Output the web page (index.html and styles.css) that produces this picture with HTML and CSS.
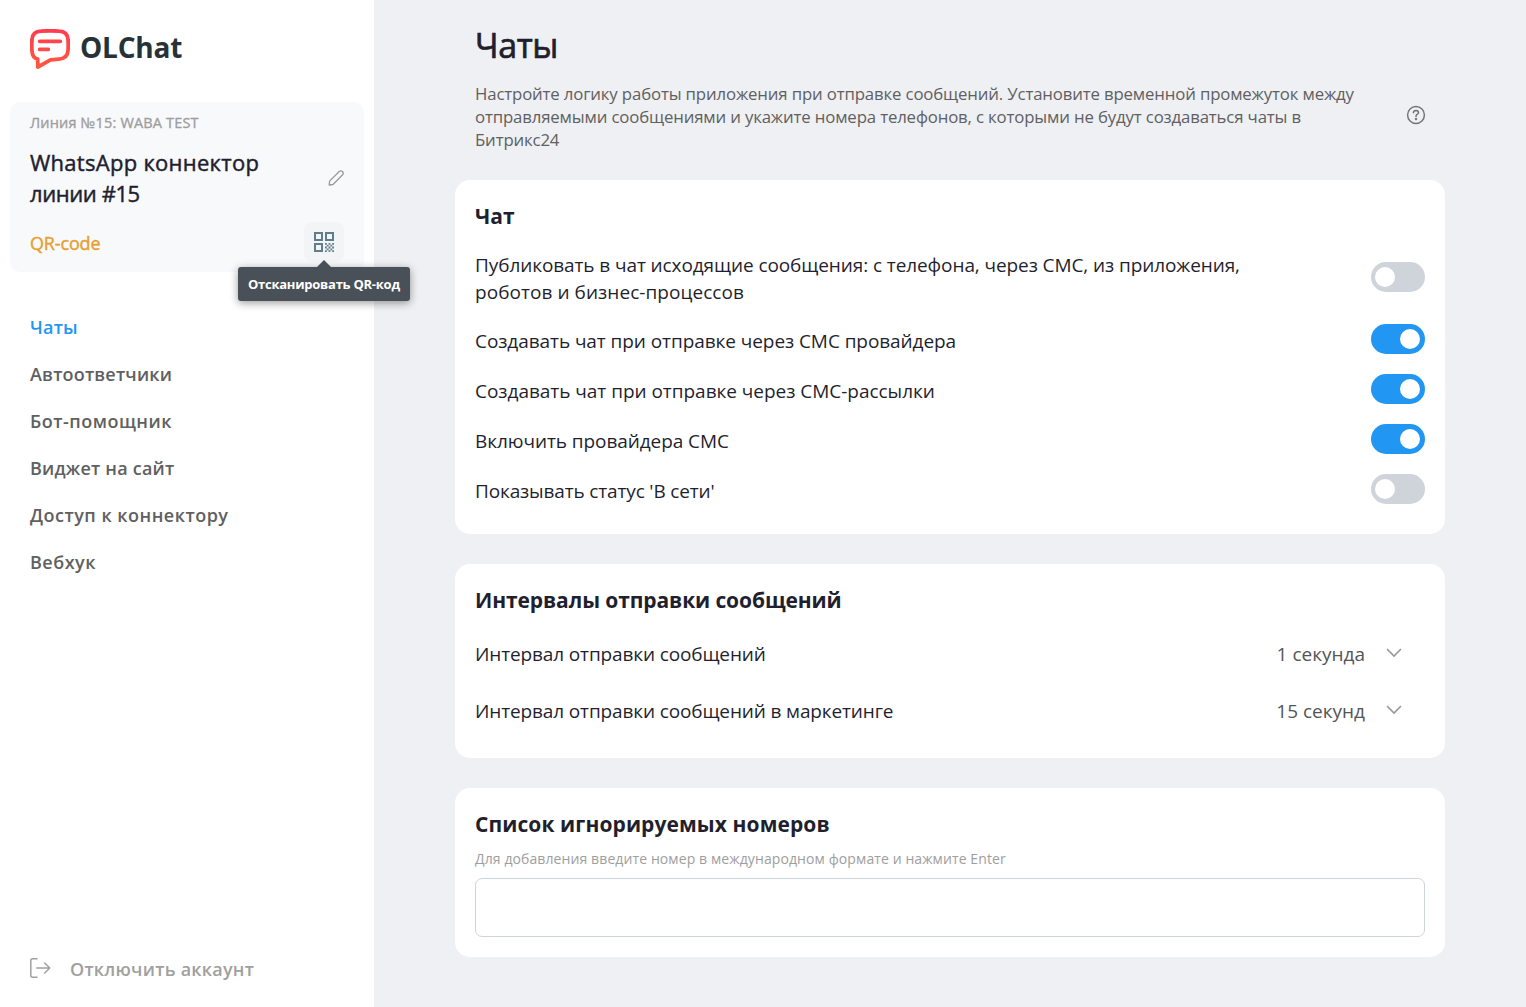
FILE: index.html
```html
<!DOCTYPE html>
<html lang="ru">
<head>
<meta charset="utf-8">
<title>OLChat</title>
<link rel="stylesheet" href="styles.css">
</head>
<body>
<div class="app">
  <aside class="sidebar">
    <a class="brand">
      <svg class="brand-icon" width="40" height="40" viewBox="0 0 40 40" fill="none">
        <defs><linearGradient id="coral" x1="0" y1="0" x2="0" y2="40" gradientUnits="userSpaceOnUse"><stop stop-color="#ff3c50"/><stop offset="1" stop-color="#ff5a3f"/></linearGradient></defs>
        <g stroke="url(#coral)" stroke-width="3.8" stroke-linecap="round" stroke-linejoin="round">
          <path d="M11 2.1Q20 1.6 29 2.1Q37.5 2.3 38 10.5Q38.5 16 38 21.5Q37.5 29.5 29 30.2L20.5 30.8L7.8 38L7.7 30Q2.3 29 2 22Q1.5 16 2 10.5Q2.5 2.3 11 2.1Z"/>
          <path d="M9.7 12.3H30.3V12.35H9.7M9.7 20.4H18.3"/>
        </g>
      </svg>
      <span class="brand-name">OLChat</span>
    </a>
    <section class="line-card">
      <div class="line-label"><span>Линия №15: WABA TEST</span></div>
      <div class="line-head">
        <div class="line-name"><span class="n1">WhatsApp коннектор</span><br><span class="n2">линии #15</span></div>
        <svg class="edit" width="16" height="16" viewBox="0 0 16 16" fill="none" stroke="#999" stroke-width="1.3" stroke-linejoin="round"><path d="M1.2 15L1.6 11.1L11.2 1.5Q12.9 .2 14.5 1.5Q15.9 3.1 14.6 4.8L5 14.5Z"/></svg>
      </div>
      <div class="line-foot">
        <span class="status">QR-code</span>
        <button class="qr" aria-label="Отсканировать QR-код">
          <svg width="20" height="20" viewBox="0 0 20 20" fill="#607d8b"><path fill-rule="evenodd" d="M0 0H9V9H0ZM2 2V7H7V2ZM11 0H20V9H11ZM13 2V7H18V2ZM0 11H9V20H0ZM2 13V18H7V13Z"/><path d="M11 11h1.8v1.8h-1.8zM14.6 11h1.8v1.8h-1.8zM12.8 12.8h1.8v1.8h-1.8zM16.4 12.8h1.8v1.8h-1.8zM18.2 11h1.8v1.8h-1.8zM11 14.6h1.8v1.8h-1.8zM14.6 14.6h1.8v1.8h-1.8zM18.2 14.6h1.8v1.8h-1.8zM12.8 16.4h1.8v1.8h-1.8zM16.4 16.4h1.8v1.8h-1.8zM11 18.2h1.8v1.8h-1.8zM14.6 18.2h1.8v1.8h-1.8zM18.2 18.2h1.8v1.8h-1.8z"/></svg>
          <span class="tooltip"><span>Отсканировать QR-код</span></span>
        </button>
      </div>
    </section>
    <nav class="menu">
      <a class="active"><span class="m1">Чаты</span></a>
      <a><span class="m2">Автоответчики</span></a>
      <a><span class="m3">Бот-помощник</span></a>
      <a><span class="m4">Виджет на сайт</span></a>
      <a><span class="m5">Доступ к коннектору</span></a>
      <a><span class="m6">Вебхук</span></a>
    </nav>
    <a class="logout">
      <svg width="22" height="20" viewBox="0 0 22 20" fill="none" stroke="#a0a0a0" stroke-width="1.5" stroke-linecap="round" stroke-linejoin="round"><path d="M7 .8H2.8Q.8 .8 .8 2.8V17.2Q.8 19.2 2.8 19.2H7M6.8 10H19.8M14.7 5L19.8 10L14.7 15"/></svg>
      <span>Отключить аккаунт</span>
    </a>
  </aside>
  <main class="main">
    <div class="content">
      <header class="intro">
        <div class="intro-text">
          <h1>Чаты</h1>
          <p>Настройте логику работы приложения при отправке сообщений. Установите временной промежуток между<br>отправляемыми сообщениями и укажите номера телефонов, с которыми не будут создаваться чаты в<br>Битрикс24</p>
        </div>
        <svg class="help" width="20" height="20" viewBox="0 0 20 20" fill="none" stroke="#757575" stroke-width="1.5" stroke-linecap="round"><circle cx="10" cy="10" r="8.4"/><path d="M7.4 7.7Q7.5 5.4 10 5.4Q12.5 5.5 12.5 7.6Q12.4 8.7 11.1 9.4Q10 10.1 10 11.4"/><circle cx="10" cy="14.1" r=".5"/></svg>
      </header>

      <section class="card chat">
        <h2>Чат</h2>
        <div class="row tall"><div class="label"><span class="r1">Публиковать в чат исходящие сообщения: с телефона, через СМС, из приложения,</span><br><span class="r2">роботов и бизнес-процессов</span></div><i class="switch"></i></div>
        <div class="row"><div class="label"><span class="r3">Создавать чат при отправке через СМС провайдера</span></div><i class="switch on"></i></div>
        <div class="row"><div class="label"><span class="r4">Создавать чат при отправке через СМС-рассылки</span></div><i class="switch on"></i></div>
        <div class="row"><div class="label"><span class="r5">Включить провайдера СМС</span></div><i class="switch on"></i></div>
        <div class="row"><div class="label"><span class="r6">Показывать статус 'В сети'</span></div><i class="switch"></i></div>
      </section>

      <section class="card intervals">
        <h2><span class="h2t">Интервалы отправки сообщений</span></h2>
        <div class="pick"><span class="k">Интервал отправки сообщений</span><div class="value"><span>1 секунда</span><svg width="16" height="10" viewBox="0 0 16 10" fill="none" stroke="#999" stroke-width="1.7" stroke-linecap="round"><path d="M1.5 1.5L8 8L14.5 1.5"/></svg></div></div>
        <div class="pick"><span class="k">Интервал отправки сообщений в маркетинге</span><div class="value"><span>15 секунд</span><svg width="16" height="10" viewBox="0 0 16 10" fill="none" stroke="#999" stroke-width="1.7" stroke-linecap="round"><path d="M1.5 1.5L8 8L14.5 1.5"/></svg></div></div>
      </section>

      <section class="card ignore">
        <h2><span class="h3t">Список игнорируемых номеров</span></h2>
        <div class="hint">Для добавления введите номер в международном формате и нажмите Enter</div>
        <div class="field"></div>
      </section>
    </div>
  </main>
</div>
</body>
</html>
```
FILE: styles.css
```css
* { box-sizing: border-box; }
body { margin: 0; font-family: "Open Sans", "Noto Sans", sans-serif; color: #1f1f2e; background: #eff0f4; }
h1, h2, p { margin: 0; }
.app { display: flex; height: 1007px; overflow: hidden; }

.sidebar { width: 374px; flex: none; background: #fff; display: flex; flex-direction: column; padding: 29px 10px 23px; }
.brand { display: flex; align-items: center; gap: 10px; height: 40px; padding-left: 20px; }
.brand-name { font-size: 28px; font-weight: 700; color: #263238; line-height: 40px; letter-spacing: -.2px; margin-top: -4px; }

.line-card { margin-top: 33px; height: 170px; border-radius: 10px; background: #f8f9fb; padding: 10px 20px; display: flex; flex-direction: column; }
.line-label { font-size: 14.5px; line-height: 21px; color: #9e9e9e; white-space: nowrap; letter-spacing: .17px; -webkit-text-stroke: .35px; }
.line-head { display: flex; align-items: center; justify-content: space-between; margin-top: 14px; height: 62px; }
.line-name { font-size: 22px; line-height: 31px; white-space: nowrap; -webkit-text-stroke: .45px; }
.n1 { letter-spacing: .28px; }
.n2 { letter-spacing: -.42px; }
.edit { margin-top: -1px; }
.line-foot { display: flex; align-items: center; justify-content: space-between; margin-top: 13px; height: 40px; }
.status { font-size: 18px; color: #e6a02e; letter-spacing: -.15px; padding-top: 2px; -webkit-text-stroke: .4px; }
.qr { position: relative; width: 40px; height: 40px; border: 0; border-radius: 8px; padding: 0; background: #f3f4f6; display: flex; align-items: center; justify-content: center; font-family: inherit; }
.tooltip { position: absolute; top: 45px; left: -66px; width: 172px; height: 34px; border-radius: 3px; background: #495057; box-shadow: 0 2px 8px rgba(0, 0, 0, .4); color: #fff; font-size: 13px; font-weight: 700; line-height: 34px; text-align: left; padding-left: 10px; white-space: nowrap; letter-spacing: -.25px; z-index: 2; }
.tooltip::before { content: ""; position: absolute; left: 79px; top: -7px; border: 7px solid transparent; border-top: 0; border-bottom-color: #495057; }

.menu { margin-top: 32px; padding-left: 20px; display: flex; flex-direction: column; }
.menu a { height: 47px; line-height: 47px; font-size: 18px; font-weight: 600; color: #606060; white-space: nowrap; }
.menu .active { color: #2196f3; }
.m1, .m2, .m4 { letter-spacing: .2px; }
.m3, .m5, .m6 { letter-spacing: .5px; }
.logout { margin-top: auto; padding-left: 20px; display: flex; align-items: center; gap: 18px; height: 30px; font-size: 18px; font-weight: 600; color: #a0a0a0; white-space: nowrap; letter-spacing: .24px; }
.logout svg { margin-top: -2px; }

.main { flex: 1; display: flex; justify-content: center; }
.content { width: 990px; }
.intro { display: flex; height: 180px; padding: 24px 19px 0 20px; justify-content: space-between; }
h1 { font-size: 34px; line-height: 42px; font-weight: 400; letter-spacing: -.4px; -webkit-text-stroke: .7px; }
.intro p { margin-top: 16px; font-size: 16.8px; line-height: 23px; color: #606060; white-space: nowrap; letter-spacing: -.15px; }
.help { margin-top: 81px; }

.card { background: #fff; border-radius: 15px; padding: 20px; }
.card + .card { margin-top: 30px; }
h2 { font-size: 21px; line-height: 32px; font-weight: 700; }
.h2t { letter-spacing: -.1px; }
.h3t { letter-spacing: .09px; }
.label, .pick { font-size: 19px; line-height: 27px; white-space: nowrap; }
.chat { height: 354px; }
.row { display: flex; justify-content: space-between; margin-top: 20px; height: 30px; }
.row.tall { height: 52px; }
.row.tall .switch { margin-top: 10px; }
.row:not(.tall) .label { padding-top: 4px; }
.r1 { letter-spacing: -.09px; }
.r2 { letter-spacing: .06px; }
.r3, .r5 { letter-spacing: -.07px; }
.r4 { letter-spacing: -.03px; }
.r6 { letter-spacing: -.15px; }
.k { letter-spacing: -.13px; }
.switch { width: 54px; height: 30px; border-radius: 15px; background: #ced4da; padding: 5px 4px; display: flex; }
.switch::before { content: ""; width: 20px; height: 20px; border-radius: 50%; background: #fff; }
.switch.on { background: #2196f3; justify-content: flex-end; padding-right: 5px; }

.intervals { height: 194px; }
.pick { display: flex; justify-content: space-between; align-items: center; height: 57px; margin-top: 10px; padding-right: 23px; }
.pick + .pick { margin-top: 0; }
.value { display: flex; align-items: center; gap: 22px; color: #555; }
.value svg { margin-top: -3px; }
.value span { margin-right: -1px; }

.ignore { height: 169px; }
.hint { margin-top: 8px; font-size: 14px; line-height: 22px; color: #9e9e9e; white-space: nowrap; letter-spacing: .1px; }
.field { margin-top: 8px; height: 59px; border: 1px solid #ced4da; border-radius: 7px; }
```
